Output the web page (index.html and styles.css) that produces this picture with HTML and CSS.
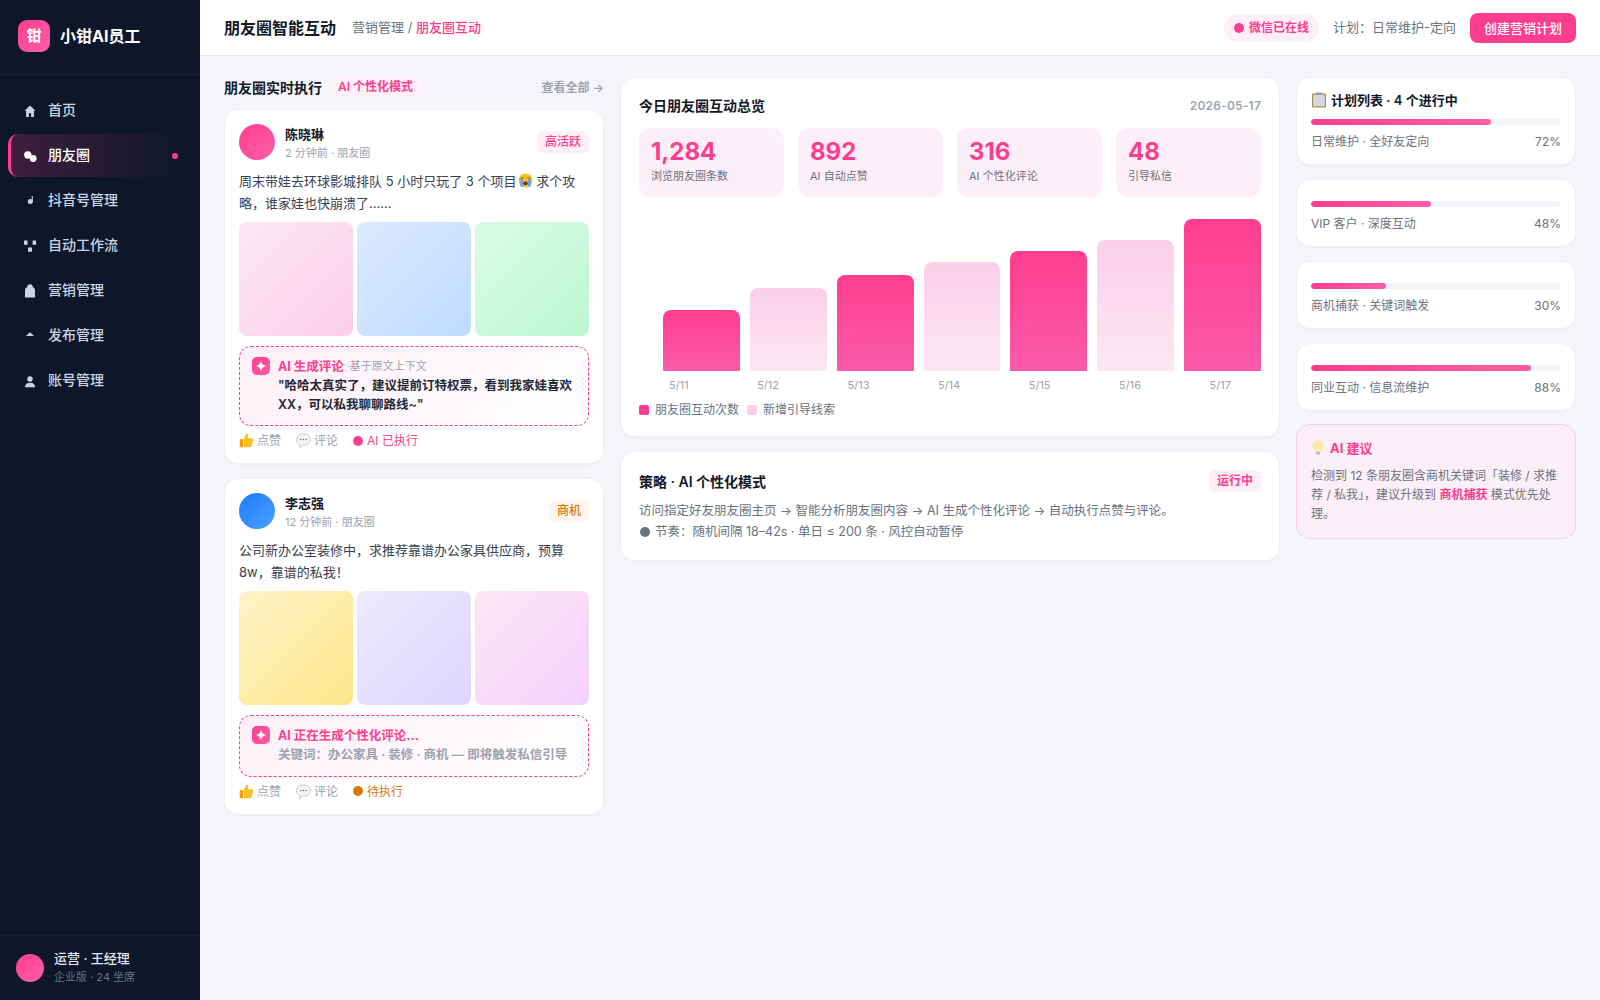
FILE: index.html
```html
<!DOCTYPE html>
<html lang="zh-CN">
<head>
<meta charset="utf-8">
<title>朋友圈智能互动</title>
<link rel="stylesheet" href="styles.css">
</head>
<body>
<div class="app">
  <aside class="sidebar">
    <div class="brand"><div class="logo">钳</div><div class="brand-name">小钳AI员工</div></div>
    <nav class="nav">
      <a class="nav-item"><svg class="nav-icon" viewBox="0 0 14 14"><path d="M7 1.500 1.500 6.800h1.600V13h2.800V9.200h2.200V13h2.800V6.800h1.600z"/></svg><span>首页</span></a>
      <a class="nav-item active"><svg class="nav-icon" viewBox="0 0 14 14"><circle cx="4.800" cy="6" r="3.700"/><circle cx="10.200" cy="9.500" r="3.400"/></svg><span>朋友圈</span><i class="nav-dot"></i></a>
      <a class="nav-item"><svg class="nav-icon" viewBox="0 0 14 14"><path d="M8.700 2h1.100v6h-1.100z"/><circle cx="7.300" cy="7.600" r="2.500"/></svg><span>抖音号管理</span></a>
      <a class="nav-item"><svg class="nav-icon" viewBox="0 0 14 14"><path d="M1 1.500h3.500v4.300H1zM9.600 1.500h3.500v4.300H9.600zM5 8.500h4v4.300H5z"/></svg><span>自动工作流</span></a>
      <a class="nav-item"><svg class="nav-icon" viewBox="0 0 14 14"><path d="M5.200.5h3.600c.5 1 .8 2.200 1.500 3 1 .6 1.700 1.400 1.700 2.500v7.500H2V6c0-1.100.7-1.900 1.700-2.500.7-.8 1-2 1.500-3z"/></svg><span>营销管理</span></a>
      <a class="nav-item"><svg class="nav-icon" viewBox="0 0 14 14"><path d="M7 3.200 11 7H3z"/></svg><span>发布管理</span></a>
      <a class="nav-item"><svg class="nav-icon" viewBox="0 0 14 14"><circle cx="7" cy="5" r="2.700"/><path d="M2 13.200c0-3 2.200-4.400 5-4.400s5 1.400 5 4.400z"/></svg><span>账号管理</span></a>
    </nav>
    <div class="side-foot">
      <div class="side-avatar"></div>
      <div><div class="side-name">运营 · 王经理</div><div class="side-sub">企业版 · 24 坐席</div></div>
    </div>
  </aside>

  <div class="content">
    <header class="topbar">
      <h1 class="page-title">朋友圈智能互动</h1>
      <div class="crumb">营销管理 / <b>朋友圈互动</b></div>
      <div class="top-right">
        <div class="online"><i class="dot"></i>微信已在线</div>
        <div class="plan-now">计划：日常维护-定向</div>
        <button class="create">创建营销计划</button>
      </div>
    </header>

    <main class="board">
      <section class="feed">
        <div class="feed-head">
          <h2 class="feed-title">朋友圈实时执行</h2>
          <span class="chip">AI 个性化模式</span>
          <a class="all">查看全部 →</a>
        </div>

        <article class="card post">
          <div class="post-head">
            <div class="avatar pink"></div>
            <div class="who"><div class="who-name">陈晓琳</div><div class="who-meta">2 分钟前 · 朋友圈</div></div>
            <span class="tag">高活跃</span>
          </div>
          <p class="post-text">周末带娃去环球影城排队 5 小时只玩了 3 个项目<svg class="emoji" viewBox="0 0 16 16"><circle cx="8" cy="8" r="7.500" fill="#fbbf24"/><rect x="2.500" y="6.500" width="3" height="8.500" rx="1.400" fill="#60a5fa"/><rect x="10.500" y="6.500" width="3" height="8.500" rx="1.400" fill="#60a5fa"/><path d="M2.800 5.800 6 5M13.200 5.800 10 5" stroke="#7c4a12" stroke-width="1"/><ellipse cx="8" cy="11" rx="2.400" ry="2" fill="#7c2d12"/></svg> 求个攻略，谁家娃也快崩溃了......</p>
          <div class="pics"><div class="pic p1"></div><div class="pic p2"></div><div class="pic p3"></div></div>
          <div class="ai-box">
            <div class="spark"><svg viewBox="0 0 18 18"><path d="M9 3.800c.5 3 1.900 4.600 5.200 5.200-3.300.6-4.700 2.200-5.200 5.200-.5-3-1.900-4.600-5.200-5.200 3.300-.6 4.700-2.200 5.200-5.200z" fill="#fff"/></svg></div>
            <div class="ai-main">
              <div class="ai-head"><b>AI 生成评论</b><span>基于原文上下文</span></div>
              <div class="ai-text">"哈哈太真实了，建议提前订特权票，看到我家娃喜欢 XX，可以私我聊聊路线~"</div>
            </div>
          </div>
          <div class="actions">
            <span class="act"><svg class="mini" viewBox="0 0 16 16"><path d="M5 6.500 8 .8c1.500-.3 2.200.9 1.900 2.200L9.400 5.700h4.300c1.100 0 1.700 1 1.400 1.900l-1.600 6.300c-.2.800-.8 1.200-1.500 1.200H5z" fill="#fbbf24"/><rect x=".8" y="6.500" width="3.500" height="8.600" rx=".8" fill="#f59e0b"/></svg>点赞</span>
            <span class="act"><svg class="mini" viewBox="0 0 16 16"><path d="M8 1c4.100 0 7.500 2.600 7.500 6s-3.400 6-7.500 6H7l-3 2.800.4-3.200C2 11.600.5 9.500.5 7 .5 3.600 3.900 1 8 1z" fill="#f3f4f6" stroke="#b6bac2" stroke-width=".8"/><circle cx="5" cy="7" r=".8" fill="#6b7280"/><circle cx="8" cy="7" r=".8" fill="#6b7280"/><circle cx="11" cy="7" r=".8" fill="#6b7280"/></svg>评论</span>
            <span class="act state"><i class="dot"></i>AI 已执行</span>
          </div>
        </article>

        <article class="card post">
          <div class="post-head">
            <div class="avatar blue"></div>
            <div class="who"><div class="who-name">李志强</div><div class="who-meta">12 分钟前 · 朋友圈</div></div>
            <span class="tag amber">商机</span>
          </div>
          <p class="post-text">公司新办公室装修中，求推荐靠谱办公家具供应商，预算 8w，靠谱的私我！</p>
          <div class="pics"><div class="pic p4"></div><div class="pic p5"></div><div class="pic p6"></div></div>
          <div class="ai-box">
            <div class="spark"><svg viewBox="0 0 18 18"><path d="M9 3.800c.5 3 1.900 4.600 5.200 5.200-3.300.6-4.700 2.200-5.200 5.200-.5-3-1.900-4.600-5.200-5.200 3.300-.6 4.700-2.200 5.200-5.200z" fill="#fff"/></svg></div>
            <div class="ai-main">
              <div class="ai-head"><b>AI 正在生成个性化评论...</b></div>
              <div class="ai-text muted">关键词：办公家具 · 装修 · 商机 — 即将触发私信引导</div>
            </div>
          </div>
          <div class="actions">
            <span class="act"><svg class="mini" viewBox="0 0 16 16"><path d="M5 6.500 8 .8c1.500-.3 2.200.9 1.900 2.200L9.400 5.700h4.300c1.100 0 1.700 1 1.400 1.900l-1.600 6.300c-.2.800-.8 1.200-1.500 1.200H5z" fill="#fbbf24"/><rect x=".8" y="6.500" width="3.500" height="8.600" rx=".8" fill="#f59e0b"/></svg>点赞</span>
            <span class="act"><svg class="mini" viewBox="0 0 16 16"><path d="M8 1c4.100 0 7.500 2.600 7.500 6s-3.400 6-7.500 6H7l-3 2.800.4-3.200C2 11.600.5 9.500.5 7 .5 3.600 3.900 1 8 1z" fill="#f3f4f6" stroke="#b6bac2" stroke-width=".8"/><circle cx="5" cy="7" r=".8" fill="#6b7280"/><circle cx="8" cy="7" r=".8" fill="#6b7280"/><circle cx="11" cy="7" r=".8" fill="#6b7280"/></svg>评论</span>
            <span class="act state amber"><i class="dot"></i>待执行</span>
          </div>
        </article>
      </section>

      <section class="middle">
        <div class="card overview">
          <div class="ov-head"><h2 class="card-title">今日朋友圈互动总览</h2><span class="date">2026-05-17</span></div>
          <div class="stats">
            <div class="stat"><div class="num">1,284</div><div class="lab">浏览朋友圈条数</div></div>
            <div class="stat"><div class="num">892</div><div class="lab">AI 自动点赞</div></div>
            <div class="stat"><div class="num">316</div><div class="lab">AI 个性化评论</div></div>
            <div class="stat"><div class="num">48</div><div class="lab">引导私信</div></div>
          </div>
          <div class="bars">
            <div class="bar hot" style="height:61px"></div>
            <div class="bar soft" style="height:83px"></div>
            <div class="bar hot" style="height:96px"></div>
            <div class="bar soft" style="height:109px"></div>
            <div class="bar hot" style="height:120px"></div>
            <div class="bar soft" style="height:131px"></div>
            <div class="bar hot" style="height:152px"></div>
          </div>
          <div class="xaxis"><span>5/11</span><span>5/12</span><span>5/13</span><span>5/14</span><span>5/15</span><span>5/16</span><span>5/17</span></div>
          <div class="legend">
            <span class="lg"><i class="sw hot"></i>朋友圈互动次数</span>
            <span class="lg"><i class="sw soft"></i>新增引导线索</span>
          </div>
        </div>
        <div class="card strategy">
          <div class="st-head"><h2 class="card-title">策略 · AI 个性化模式</h2><span class="tag strong">运行中</span></div>
          <p class="st-text">访问指定好友朋友圈主页 → 智能分析朋友圈内容 → AI 生成个性化评论 → 自动执行点赞与评论。</p>
          <p class="st-text"><i class="gray-dot"></i>节奏：随机间隔 18–42s · 单日 ≤ 200 条 · 风控自动暂停</p>
        </div>
      </section>

      <section class="right">
        <div class="card plan">
          <h3 class="plan-title"><svg class="clip" viewBox="0 0 16 16"><rect x="1" y="1.500" width="14" height="14" rx="1" fill="#b08a5b"/><rect x="2.200" y="2.800" width="11.600" height="11.500" fill="#d8d8dc"/><rect x="4.500" y=".5" width="7" height="2.500" rx=".6" fill="#9aa0a8"/></svg>计划列表 · 4 个进行中</h3>
          <div class="track"><div class="fill" style="width:72%"></div></div>
          <div class="plan-row"><span>日常维护 · 全好友定向</span><span>72%</span></div>
        </div>
        <div class="card plan">
          <div class="track"><div class="fill" style="width:48%"></div></div>
          <div class="plan-row"><span>VIP 客户 · 深度互动</span><span>48%</span></div>
        </div>
        <div class="card plan">
          <div class="track"><div class="fill" style="width:30%"></div></div>
          <div class="plan-row"><span>商机捕获 · 关键词触发</span><span>30%</span></div>
        </div>
        <div class="card plan">
          <div class="track"><div class="fill" style="width:88%"></div></div>
          <div class="plan-row"><span>同业互动 · 信息流维护</span><span>88%</span></div>
        </div>
        <div class="advice">
          <h3 class="advice-title"><svg class="bulb" viewBox="0 0 16 18"><path d="M8 1a5.500 5.500 0 0 0-3.200 10c.7.6 1 1.200 1 2h4.400c0-.8.3-1.400 1-2A5.500 5.500 0 0 0 8 1z" fill="#fde9a8" stroke="#f3d77a" stroke-width=".6"/><rect x="5.800" y="13.400" width="4.400" height="3" rx=".8" fill="#b5b9c0"/></svg>AI 建议</h3>
          <p class="advice-text">检测到 12 条朋友圈含商机关键词「装修 / 求推荐 / 私我」，建议升级到 <b>商机捕获</b> 模式优先处理。</p>
        </div>
      </section>
    </main>
  </div>
</div>
</body>
</html>
```
FILE: styles.css
```css
* { box-sizing: border-box; }
html, body { margin: 0; height: 100%; }
body {
  font-family: "Inter", "Noto Sans CJK SC", sans-serif;
  background: #f4f5fa;
  color: #111827;
  overflow: hidden;
}
h1, h2, h3, p { margin: 0; }
.app { display: flex; height: 100vh; }

/* sidebar */
.sidebar {
  width: 200px;
  flex: none;
  background: #0e1729;
  display: flex;
  flex-direction: column;
}
.brand {
  display: flex;
  align-items: center;
  gap: 10px;
  padding: 0 18px 3px;
  height: 75px;
  border-bottom: 1px solid #172034;
}
.logo {
  width: 32px;
  height: 32px;
  border-radius: 9px;
  background: linear-gradient(135deg, #ff3d8f, #ff5fa8);
  color: #fff;
  font-size: 15px;
  font-weight: 700;
  line-height: 31px;
  text-align: center;
}
.brand-name { color: #fff; font-size: 16px; font-weight: 700; line-height: 22px; }
.nav { padding: 14px 8px 0; display: flex; flex-direction: column; gap: 2px; }
.nav-item {
  height: 43px;
  display: flex;
  align-items: center;
  gap: 11px;
  padding-left: 15px;
  color: #cbd5e1;
  font-size: 14px;
  font-weight: 500;
  border-radius: 10px;
  position: relative;
}
.nav-item span { line-height: 20px; margin-top: -2px; }
.nav-icon { width: 14px; height: 14px; fill: #cbd5e1; flex: none; }
.nav-item.active {
  color: #fff;
  padding-left: 12px;
  border-left: 3px solid #ff3d8f;
  background: linear-gradient(90deg, rgba(255, 61, 143, .2), rgba(255, 61, 143, 0));
  width: 176px;
}
.nav-item.active .nav-icon { fill: #fff; }
.nav-dot {
  position: absolute;
  left: 161px;
  top: 19px;
  width: 6px;
  height: 6px;
  border-radius: 50%;
  background: #ff3d8f;
}
.side-foot {
  margin-top: auto;
  height: 65px;
  border-top: 1px solid #172034;
  padding: 0 16px;
  display: flex;
  align-items: center;
  gap: 10px;
}
.side-avatar {
  width: 28px;
  height: 28px;
  border-radius: 50%;
  background: linear-gradient(135deg, #ff3d8f, #ff5fa8);
  flex: none;
}
.side-name { color: #e2e8f0; font-size: 13px; font-weight: 500; line-height: 18px; margin-top: -2px; }
.side-sub { color: #64748b; font-size: 11px; line-height: 16px; margin-top: 2px; }

/* topbar */
.content { flex: 1; min-width: 0; display: flex; flex-direction: column; }
.topbar {
  height: 56px;
  flex: none;
  background: #fff;
  border-bottom: 1px solid #e5e7eb;
  padding: 0 24px 2px;
  display: flex;
  align-items: center;
}
.page-title { font-size: 16px; font-weight: 700; color: #111827; }
.crumb { margin-left: 16px; font-size: 13px; color: #6b7280; }
.crumb b { color: #ff3d8f; font-weight: 500; }
.top-right { margin-left: auto; display: flex; align-items: center; margin-bottom: -2px; }
.online {
  height: 26px;
  padding: 0 10px 2px;
  border-radius: 13px;
  background: #fdeff7;
  color: #ff3d8f;
  font-size: 12px;
  font-weight: 600;
  display: flex;
  align-items: center;
  gap: 5px;
}
.online .dot { margin-top: 2px; }
.dot { width: 10px; height: 10px; border-radius: 50%; background: currentColor; flex: none; }
.plan-now { margin-left: 14px; font-size: 13px; color: #6b7280; margin-top: -2px; }
.create {
  margin-left: 14px;
  height: 30px;
  width: 106px;
  padding: 0;
  border: 0;
  border-radius: 8px;
  background: #ff3d8f;
  color: #fff;
  font: 500 13px "Inter", "Noto Sans CJK SC", sans-serif;
}

/* board */
.board {
  flex: 1;
  display: grid;
  grid-template-columns: 380px 1fr 280px;
  gap: 16px;
  padding: 21px 24px 0;
  align-items: start;
}
.card {
  background: #fff;
  border: 1px solid #eef0f5;
  border-radius: 14px;
  box-shadow: 0 1px 2px rgba(15, 23, 42, .03);
}

/* feed */
.feed { margin-top: -2px; display: flex; flex-direction: column; gap: 14px; }
.feed-head { display: flex; align-items: center; height: 23px; margin-bottom: -3px; }
.feed-title { font-size: 14px; font-weight: 600; color: #111827; }
.chip {
  margin-left: 8px;
  padding: 3px 8px;
  border-radius: 6px;
  background: #fdeff7;
  color: #ff3d8f;
  font-size: 12px;
  line-height: 17px;
  font-weight: 600;
}
.all { margin-left: auto; color: #9ca3af; font-size: 12px; font-weight: 600; }
.post { padding: 14px; }
.post-head { display: flex; align-items: center; gap: 10px; height: 36px; }
.avatar { width: 36px; height: 36px; border-radius: 50%; flex: none; }
.pink { background: linear-gradient(135deg, #ff3d8f, #ff5fa8); }
.blue { background: linear-gradient(135deg, #1d7cff, #4ba0ff); }
.who { flex: 1; min-width: 0; }
.who-name { font-size: 13px; font-weight: 600; line-height: 20px; color: #111827; }
.who-meta { font-size: 11px; line-height: 16px; color: #9ca3af; margin-top: 1px; }
.tag {
  height: 22px;
  padding: 0 8px;
  border-radius: 6px;
  background: #fdeff7;
  color: #ff3d8f;
  font-size: 12px;
  font-weight: 500;
  line-height: 21px;
  flex: none;
}
.tag.amber { background: #fff7ed; color: #d97706; }
.tag.strong { font-weight: 600; }
.post-text { margin-top: 10px; font-size: 13px; line-height: 22px; color: #374151; }
.emoji { width: 15px; height: 15px; vertical-align: -2px; margin-left: 1px; }
.pics { margin-top: 8px; display: grid; grid-template-columns: repeat(3, 1fr); gap: 4px; }
.pic { aspect-ratio: 1; border-radius: 8px; }
.p1 { background: linear-gradient(135deg, #fce7f3, #fbcfe8); }
.p2 { background: linear-gradient(135deg, #dbeafe, #bfdbfe); }
.p3 { background: linear-gradient(135deg, #dcfce7, #bbf7d0); }
.p4 { background: linear-gradient(135deg, #fef3c7, #fde68a); }
.p5 { background: linear-gradient(135deg, #ede9fe, #ddd6fe); }
.p6 { background: linear-gradient(135deg, #fce7f3, #f5d0fe); }
.ai-box {
  margin-top: 10px;
  padding: 10px 12px 11px;
  border: 1px dashed #ff3d8f;
  border-radius: 12px;
  background: linear-gradient(135deg, #fdeff7, #fff);
  display: flex;
  gap: 8px;
}
.spark {
  width: 18px;
  height: 18px;
  flex: none;
  border-radius: 5px;
  background: linear-gradient(135deg, #ff3d8f, #ff5fa8);
}
.spark svg { display: block; width: 18px; height: 18px; }
.ai-main { flex: 1; min-width: 0; }
.ai-head { display: flex; align-items: center; gap: 6px; height: 16px; }
.ai-head b { color: #ff3d8f; font-size: 12.500px; font-weight: 700; }
.ai-head span { color: #9ca3af; font-size: 11px; }
.ai-text { margin-top: 3px; font-size: 12.500px; line-height: 19.200px; font-weight: 600; color: #1f2937; }
.ai-text.muted { color: #9ca3af; }
.actions { margin-top: 7px; padding-bottom: 1px; display: flex; gap: 15px; font-size: 12px; line-height: 15px; color: #9ca3af; }
.act { display: flex; align-items: center; gap: 3px; }
.mini { width: 15px; height: 15px; flex: none; }
.state { color: #ff3d8f; gap: 4px; }
.state.amber { color: #d97706; }

/* middle */
.middle { display: flex; flex-direction: column; gap: 14px; }
.overview { padding: 18px; }
.ov-head { display: flex; align-items: center; justify-content: space-between; height: 20px; padding-bottom: 2px; }
.card-title { font-size: 14px; font-weight: 600; color: #111827; }
.date { font-size: 12px; font-weight: 600; color: #9ca3af; letter-spacing: .2px; }
.stats { margin-top: 12px; display: grid; grid-template-columns: repeat(4, 1fr); gap: 14px; }
.stat { background: #fdeff7; border-radius: 12px; padding: 10px 12px 13px; }
.num { font-size: 24px; line-height: 28px; font-weight: 700; color: #ff3d8f; }
.lab { margin-top: 2px; font-size: 11px; line-height: 16px; color: #6b7280; }
.bars { margin-top: 22px; height: 152px; padding-left: 24px; display: flex; align-items: flex-end; gap: 10px; }
.bar { flex: 1; border-radius: 8px 8px 0 0; }
.bar.hot { background: linear-gradient(180deg, #ff3d8f, #fa5aa9); }
.bar.soft { background: linear-gradient(180deg, #fbcfe8, #fce7f3); }
.xaxis {
  margin-top: 6px;
  padding: 0 30px;
  display: flex;
  justify-content: space-between;
  font-size: 11px;
  line-height: 16px;
  color: #9ca3af;
}
.legend { margin-top: 9px; display: flex; gap: 8px; font-size: 12px; line-height: 16px; color: #6b7280; }
.lg { display: flex; align-items: center; gap: 6px; }
.sw { width: 10px; height: 10px; border-radius: 2px; }
.sw.hot { background: #ff3d8f; }
.sw.soft { background: #fbcfe8; }
.strategy { padding: 18px; }
.st-head { display: flex; align-items: center; justify-content: space-between; height: 22px; margin-bottom: 8px; }
.st-text { font-size: 12.500px; line-height: 21px; color: #6b7280; }
.gray-dot {
  display: inline-block;
  width: 10px;
  height: 10px;
  border-radius: 50%;
  background: #6b7280;
  margin: 0 5px 0 1px;
  vertical-align: -1px;
}

/* right */
.right { display: flex; flex-direction: column; gap: 14px; }
.plan { padding: 14px; }
.plan-title {
  font-size: 13px;
  line-height: 18px;
  font-weight: 600;
  color: #111827;
  display: flex;
  align-items: center;
  gap: 4px;
  margin-top: -1px;
  padding-bottom: 3px;
}
.clip { width: 16px; height: 16px; }
.track { margin-top: 7px; height: 6px; border-radius: 3px; background: #f3f4f8; overflow: hidden; }
.fill { height: 100%; border-radius: 3px; background: linear-gradient(90deg, #ff3d8f, #ff5fa8); }
.plan-row {
  margin-top: 9px;
  display: flex;
  justify-content: space-between;
  font-size: 12px;
  line-height: 16px;
  color: #6b7280;
}
.advice { margin-top: -1px; background: #fdeff7; border: 1px solid #fbcfe8; border-radius: 14px; padding: 14px; }
.advice-title {
  font-size: 13px;
  line-height: 18px;
  font-weight: 700;
  color: #ff3d8f;
  display: flex;
  align-items: center;
  gap: 5px;
}
.bulb { width: 14px; height: 16px; }
.advice-text { margin-top: 9px; font-size: 12px; line-height: 19.200px; color: #6b7280; }
.advice-text b { color: #ff3d8f; font-weight: 700; }
```
